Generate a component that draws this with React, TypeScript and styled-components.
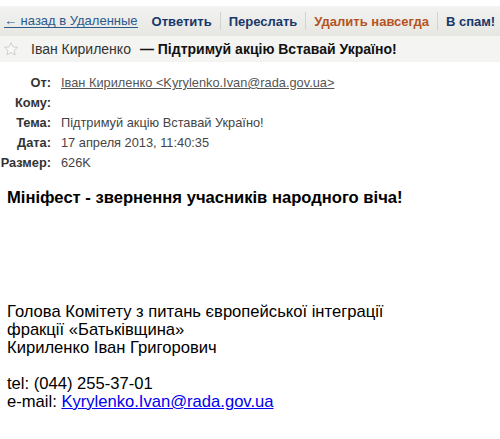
import styled, { createGlobalStyle } from "styled-components";

const GlobalStyle = createGlobalStyle`
  html, body {
    margin: 0;
    padding: 0;
    background: #ffffff;
  }
  body {
    font-family: "Liberation Sans", Arial, sans-serif;
    color: #000000;
  }
`;

const Page = styled.div`
  width: 500px;
  height: 439px;
  overflow: hidden;
  background: #ffffff;
  padding-top: 6px;
  box-sizing: border-box;
`;

const Toolbar = styled.div`
  display: flex;
  align-items: center;
  height: 30px;
  background: linear-gradient(#f3f3f1, #e6e6e3);
  font-size: 13px;
  white-space: nowrap;
`;

const BackLink = styled.a`
  color: #2c5a8c;
  text-decoration: none;
  border-bottom: 1px solid #2c5a8c;
  line-height: 13px;
  margin-left: 4px;
  margin-right: 6px;
`;

const Action = styled.span<{ $danger?: boolean }>`
  display: flex;
  align-items: center;
  height: 18px;
  padding: 0 8px;
  font-weight: bold;
  color: ${({ $danger }) => ($danger ? "#b5531f" : "#18386a")};
  border-right: 1px solid #d2d2cf;
`;

const SubjectBar = styled.div`
  display: flex;
  align-items: center;
  height: 26px;
  background: #f4f4f2;
  font-size: 14px;
  color: #222;
  white-space: nowrap;
`;

const Star = styled.svg`
  width: 16px;
  height: 16px;
  margin: 0 12px 0 3px;
`;

const Sender = styled.span`
  color: #333;
  margin-right: 9px;
`;

const Subject = styled.span`
  font-weight: bold;
  color: #111;
`;

const Headers = styled.div`
  display: grid;
  grid-template-columns: 51px auto;
  column-gap: 10px;
  row-gap: 6px;
  padding-top: 14px;
  font-size: 12.8px;
  line-height: 14px;
  white-space: nowrap;
`;

const Label = styled.span`
  text-align: right;
  font-weight: bold;
  color: #333;
`;

const Value = styled.span`
  color: #444;
`;

const FromLink = styled.a`
  color: #555;
  text-decoration: underline;
`;

const Body = styled.div`
  padding: 0 7px;
  font-size: 16.6px;
  line-height: 18px;
  white-space: nowrap;
`;

const Title = styled.div`
  font-weight: bold;
  margin-top: 19px;
`;

const Signature = styled.div`
  margin-top: 96px;
`;

const Gap = styled.div`
  height: 18px;
`;

const MailLink = styled.a`
  color: #0000ee;
  text-decoration: underline;
`;

const App = () => {
  return (
    <>
      <GlobalStyle />
      <Page>
        <Toolbar>
          <BackLink>← назад в Удаленные</BackLink>
          <Action>Ответить</Action>
          <Action>Переслать</Action>
          <Action $danger>Удалить навсегда</Action>
          <Action>В спам!</Action>
        </Toolbar>
        <SubjectBar>
          <Star viewBox="0 0 24 24">
            <path
              d="M12 2.5l2.9 6.3 6.8.7-5.1 4.6 1.5 6.8L12 17.4l-6.1 3.5 1.5-6.8-5.1-4.6 6.8-.7z"
              fill="#f9f9f7"
              stroke="#c8c8c5"
              strokeWidth="1.3"
              strokeLinejoin="round"
            />
          </Star>
          <Sender>Іван Кириленко</Sender>
          <Subject>— Підтримуй акцію Вставай Україно!</Subject>
        </SubjectBar>
        <Headers>
          <Label>От:</Label>
          <Value>
            <FromLink>Іван Кириленко &lt;Kyrylenko.Ivan@rada.gov.ua&gt;</FromLink>
          </Value>
          <Label>Кому:</Label>
          <Value />
          <Label>Тема:</Label>
          <Value>Підтримуй акцію Вставай Україно!</Value>
          <Label>Дата:</Label>
          <Value>17 апреля 2013, 11:40:35</Value>
          <Label>Размер:</Label>
          <Value>626K</Value>
        </Headers>
        <Body>
          <Title>Мініфест - звернення учасників народного віча!</Title>
          <Signature>
            Голова Комітету з питань європейської інтеграції
            <br />
            фракції «Батьківщина»
            <br />
            Кириленко Іван Григорович
            <Gap />
            tel: (044) 255-37-01
            <br />
            e-mail: <MailLink>Kyrylenko.Ivan@rada.gov.ua</MailLink>
          </Signature>
        </Body>
      </Page>
    </>
  );
};

export default App;
